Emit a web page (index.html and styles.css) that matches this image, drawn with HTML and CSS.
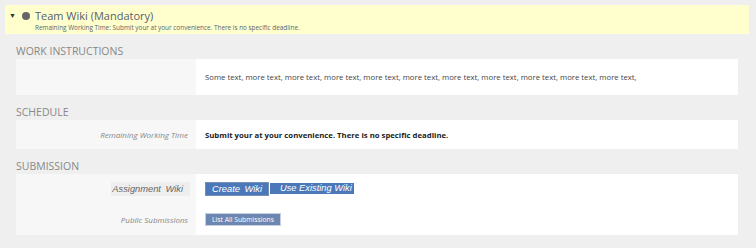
FILE: index.html
```html
<!DOCTYPE html>
<html lang="en">
<head>
  <meta charset="UTF-8" />
  <title>Team Wiki</title>
  <link rel="stylesheet" href="styles.css">
</head>
<body>

  <div class="task-bar">
    <div class="task-title">
      <span class="toggle">&#9660;</span>
      <span class="dot"></span>
      <span>Team Wiki (Mandatory)</span>
    </div>
    <div class="task-sub">Remaining Working Time: Submit your at your convenience. There is no specific deadline.</div>
  </div>

  <div class="sections">
    <h2>Work Instructions</h2>
    <div class="box">
      <div class="row tall">
        <div class="label"></div>
        <div class="value">Some text, more text, more text, more text, more text, more text, more text, more text, more text, more text, more text,</div>
      </div>
    </div>

    <h2>Schedule</h2>
    <div class="box">
      <div class="row">
        <div class="label">Remaining Working Time</div>
        <div class="value strong">Submit your at your convenience. There is no specific deadline.</div>
      </div>
    </div>

    <h2>Submission</h2>
    <div class="box">
      <div class="row sub">
        <div class="label"><span class="legacy-label">Assignment Wiki</span></div>
        <div class="value">
          <button class="legacy-btn">Create Wiki</button><button class="legacy-btn flat">Use Existing Wiki</button>
        </div>
      </div>
      <div class="row sub last">
        <div class="label">Public Submissions</div>
        <div class="value">
          <button class="btn">List All Submissions</button>
        </div>
      </div>
    </div>
  </div>

</body>
</html>
```

FILE: styles.css
```css
body {
  margin: 0;
  padding: 5px 7px 0 5px;
  font-family: "Open Sans", sans-serif;
  background: #efefef;
  color: #333;
}

.task-bar {
  background: #ffffcd;
  height: 29px;
  padding: 0 4px;
  box-sizing: border-box;
}

.task-title {
  display: flex;
  align-items: center;
  height: 17px;
  padding-top: 2px;
  font-size: 11px;
  color: #55606e;
}

.toggle {
  font-size: 7px;
  color: #333;
  margin-right: 6px;
}

.dot {
  width: 8px;
  height: 8px;
  border-radius: 50%;
  background: #666;
  margin-right: 5px;
}

.task-sub {
  font-size: 6.4px;
  color: #5a6470;
  padding-left: 26px;
  line-height: 8px;
}

.sections {
  margin: 0 11px 0 11px;
}

h2 {
  margin: 10px 0 1px;
  font-size: 10.5px;
  font-weight: normal;
  line-height: 14px;
  text-transform: uppercase;
  color: #888;
}

.box {
  background: #fff;
}

.row {
  display: flex;
  min-height: 29px;
}

.row.tall {
  min-height: 36px;
}

.row.sub {
  min-height: 30px;
}

.row.sub.last {
  min-height: 31px;
}

.label {
  flex: 0 0 180px;
  background: #f7f7f7;
  display: flex;
  align-items: center;
  justify-content: flex-end;
  padding-right: 8px;
  box-sizing: border-box;
  font-size: 8px;
  font-style: italic;
  color: #888;
}

.value {
  flex: 1;
  display: flex;
  align-items: center;
  padding-left: 9px;
  font-size: 7.75px;
  color: #444;
}

.value.strong {
  font-weight: bold;
  color: #222;
}

.legacy-label {
  font-family: "Liberation Sans", Arial, sans-serif;
  font-size: 9.3px;
  word-spacing: 2px;
  color: #666;
  background: #eeeeee;
  padding: 2px 7px 2px 1px;
  margin-right: -2px;
}

.legacy-btn {
  font-family: "Liberation Sans", Arial, sans-serif;
  font-style: italic;
  font-size: 9.3px;
  word-spacing: 2px;
  color: #fff;
  background: #4a78b8;
  border: 1px solid #7890b0;
  padding: 0 6px;
  height: 14px;
  margin: 0 1px 0 0;
}

.legacy-btn.flat {
  border: none;
  word-spacing: 0;
  height: 11px;
  align-self: flex-start;
  margin-top: 9px;
  padding: 0 2px 0 10px;
  line-height: 11px;
}

.btn {
  font-family: "Open Sans", sans-serif;
  font-size: 6.8px;
  color: #fff;
  background: #6c87b2;
  border: 1px solid #c7d0de;
  padding: 0 6px;
  height: 13px;
}
```
